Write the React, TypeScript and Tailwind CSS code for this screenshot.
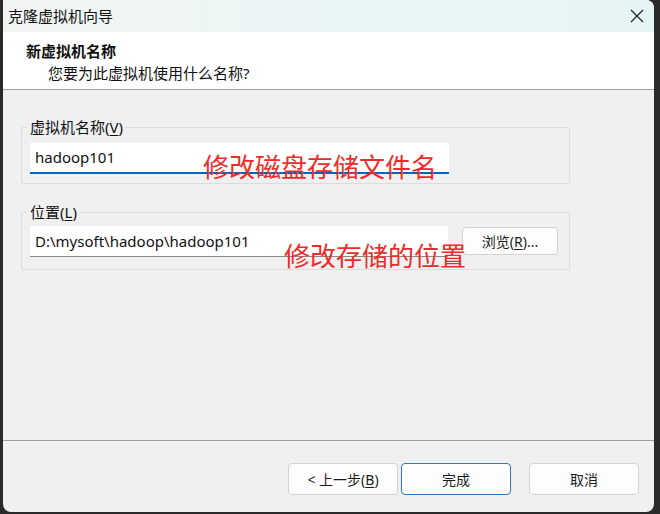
import React from "react";

const font = { fontFamily: '"Noto Sans", "Noto Sans CJK SC", sans-serif' };

function Btn({ children, primary, className = "" }: { children: React.ReactNode; primary?: boolean; className?: string }) {
  return (
    <div
      className={
        "flex items-center justify-center rounded-[4px] bg-[#fdfdfd] text-[14px] text-[#1b1b1b] " +
        (primary ? "border border-[#2f78bd] " : "border border-[#d3d3d3] ") +
        className
      }
    >
      {children}
    </div>
  );
}

export default function App() {
  return (
    <div className="w-[660px] h-[514px] bg-[#2a2a2a] overflow-hidden" style={font}>
      <div className="relative ml-[3px] w-[651px] h-[512px] rounded-tr-[8px] rounded-b-[8px] overflow-hidden bg-[#f0f0f0] flex flex-col">
        {/* Title bar */}
        <div className="h-[32px] shrink-0 flex items-center justify-between bg-gradient-to-r from-[#f2f5f3] via-[#eaf5f5] to-[#e5f4f5] pl-[5px] pr-[12px]">
          <span className="text-[15px] text-[#111]">克隆虚拟机向导</span>
          <svg width="14" height="14" viewBox="0 0 14 14" className="mr-[-2px]">
            <path d="M1 1L13 13M13 1L1 13" stroke="#222" strokeWidth="1.2" />
          </svg>
        </div>
        {/* Header */}
        <div className="h-[58px] shrink-0 bg-white border-b border-[#a0a0a0] pl-[23px] pt-[7px]">
          <div className="text-[15px] font-bold text-[#111] leading-[24px]">新虚拟机名称</div>
          <div className="text-[15px] text-[#111] leading-[20px] pl-[22px]">您要为此虚拟机使用什么名称?</div>
        </div>
        {/* Body */}
        <div className="flex-1 flex flex-col pl-[18px] pt-[37px]">
          <div className="relative w-[549px] h-[57px] border border-[#dcdcdc] rounded-[2px] pl-[8px] pt-[15px]">
            <span className="absolute left-[5px] top-[-11px] bg-[#f0f0f0] px-[3px] text-[15px] leading-[20px] text-[#111]">
              虚拟机名称(<span className="underline underline-offset-2">V</span>)
            </span>
            <div className="w-[419px] h-[31px] bg-white border-b-2 border-[#0067c0] pl-[5px] flex items-center text-[15px] text-[#111]">
              hadoop101
            </div>
          </div>
          <div className="relative mt-[28px] w-[549px] h-[58px] border border-[#dcdcdc] rounded-[2px] pl-[8px] pt-[13px] flex items-start">
            <span className="absolute left-[5px] top-[-11px] bg-[#f0f0f0] px-[3px] text-[15px] leading-[20px] text-[#111]">
              位置(<span className="underline underline-offset-2">L</span>)
            </span>
            <div className="w-[418px] h-[31px] bg-white border-b border-[#8a8a8a] pl-[5px] flex items-center text-[15px] text-[#111]">
              D:\mysoft\hadoop\hadoop101
            </div>
            <Btn className="ml-[14px] mt-[1px] w-[96px] h-[28px] text-[14px]">
              浏览(<span className="underline underline-offset-2">R</span>)...
            </Btn>
          </div>
        </div>
        {/* Footer */}
        <div className="h-[72px] shrink-0 border-t border-[#a0a0a0] flex items-start pt-[22px] pl-[285px]">
          <Btn className="w-[110px] h-[32px]">
            &lt; 上一步(<span className="underline underline-offset-2">B</span>)
          </Btn>
          <Btn primary className="ml-[3px] w-[110px] h-[32px]">完成</Btn>
          <Btn className="ml-[18px] w-[110px] h-[32px]">取消</Btn>
        </div>
        {/* Annotations */}
        <span className="absolute left-[200px] top-[152px] text-[26px] leading-[30px] text-[#ee2b2b]">修改磁盘存储文件名</span>
        <span className="absolute left-[281px] top-[241px] text-[26px] leading-[30px] text-[#ee2b2b]">修改存储的位置</span>
      </div>
    </div>
  );
}
